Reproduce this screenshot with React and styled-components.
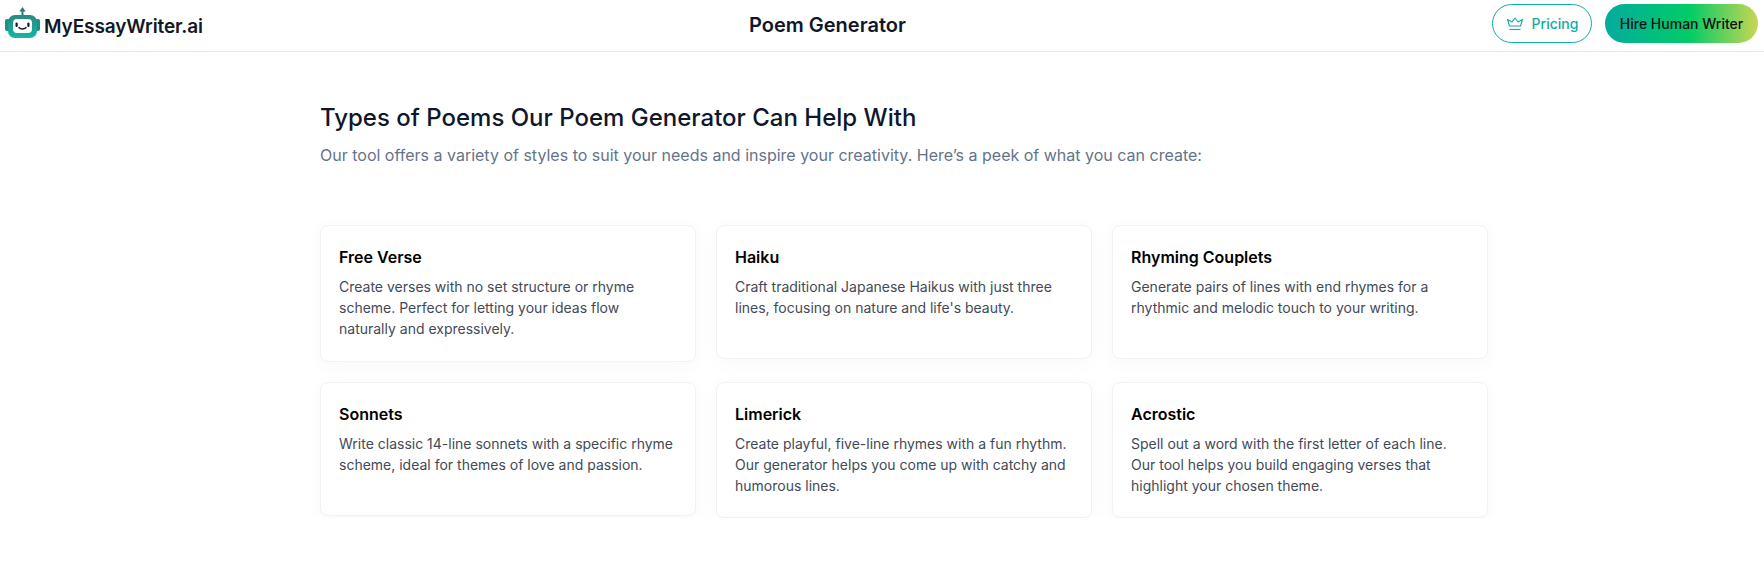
import React from 'react';
import styled, { createGlobalStyle } from 'styled-components';

const Global = createGlobalStyle`
  * { box-sizing: border-box; }
  html, body { margin: 0; padding: 0; background: #fff; }
  body { font-family: Inter, "Liberation Sans", sans-serif; color: #0f172a; }
`;

const Header = styled.header`
  height: 52px;
  border-bottom: 1px solid #e5e7eb;
  padding: 0 6px 0 5px;
  display: grid;
  grid-template-columns: 744px auto 1fr;
  align-items: center;
`;

const Brand = styled.div`
  display: flex;
  align-items: center;
  gap: 5px;
  padding-top: 2px;
  font-size: 19px;
  font-weight: 600;
  letter-spacing: -0.1px;
  color: #111827;
`;

const LogoMark = styled.svg`
  flex: none;
  margin-bottom: 8px;
  margin-right: -1px;
`;

const PageTitle = styled.h1`
  margin: 0 0 2px;
  font-size: 20px;
  font-weight: 600;
  color: #0f172a;
`;

const Actions = styled.div`
  display: flex;
  justify-content: flex-end;
  gap: 13px;
  margin-bottom: 4px;
`;

const PricingButton = styled.button`
  width: 100px;
  height: 39px;
  border: 1px solid #0fb0a2;
  border-radius: 20px;
  background: #fff;
  color: #12ada0;
  font: 500 14px Inter, sans-serif;
  display: flex;
  align-items: center;
  justify-content: center;
  gap: 8px;
`;

const HireButton = styled.button`
  width: 153px;
  height: 39px;
  border: 0;
  border-radius: 20px;
  background: linear-gradient(90deg, #06ab9f 0%, #00cc66 55%, #c8d653 100%);
  color: #111;
  font: 500 14px Inter, sans-serif;
`;

const Main = styled.main`
  width: 1168px;
  margin-left: 320px;
  padding-top: 50px;
`;

const Heading = styled.h2`
  margin: 0;
  font-size: 24px;
  line-height: 32px;
  font-weight: 500;
  color: #0f172a;
`;

const Lead = styled.p`
  margin: 9px 0 0;
  font-size: 16px;
  line-height: 24px;
  color: #64748b;
`;

const Grid = styled.div`
  margin-top: 58px;
  display: grid;
  grid-template-columns: repeat(3, 375.5px);
  column-gap: 20.5px;
  row-gap: 20px;
  align-items: start;
`;

const Card = styled.article`
  height: ${(p) => p.$h}px;
  padding: 19px 18px 0;
  background: #fff;
  border: 1px solid #f1f2f4;
  border-radius: 8px;
  box-shadow: 0 4px 20px rgba(0, 0, 0, 0.03);
`;

const CardTitle = styled.h3`
  margin: 0;
  font-size: 16px;
  line-height: 24px;
  font-weight: 600;
  color: #000;
`;

const CardText = styled.p`
  margin: 7px 0 0;
  font-size: 14px;
  line-height: 21px;
  color: #434a57;
`;

function LogoIcon() {
  return (
    <LogoMark width="35" height="31" viewBox="0 0 35 31">
      <defs>
        <linearGradient id="bot" x1="0" y1="0" x2="0" y2="1">
          <stop offset="0" stopColor="#2a8a7e" />
          <stop offset="1" stopColor="#12b8a6" />
        </linearGradient>
      </defs>
      <path d="M17.500 0l-3.200 4.600h2.200V8h2V4.600h2.200z" fill="#1f8073" />
      <rect x="0" y="12" width="5" height="12" rx="2" fill="#1f8f81" />
      <rect x="30" y="12" width="5" height="12" rx="2" fill="#1f8f81" />
      <rect x="3" y="8" width="29" height="23" rx="7" fill="url(#bot)" />
      <rect x="8" y="12" width="19" height="14" rx="4" fill="#fff" />
      <rect x="10.500" y="15.500" width="2.200" height="4.500" rx="1.100" fill="#111827" />
      <rect x="22.300" y="15.500" width="2.200" height="4.500" rx="1.100" fill="#111827" />
      <path d="M14 20.500c1.500 2 5.500 2 7 0" fill="none" stroke="#111827" strokeWidth="1.400" strokeLinecap="round" />
    </LogoMark>
  );
}

function CrownIcon() {
  return (
    <svg width="18" height="14" viewBox="0 0 18 14" fill="none" stroke="#12ada0" strokeWidth="1.1" strokeLinejoin="round">
      <path d="M3.500 9L1.500 2.500 6 5 9 1l3 4 4.500-2.500L14.500 9z" />
      <path d="M3.500 12.500h11" />
    </svg>
  );
}

const cards = [
  { title: 'Free Verse', h: 137, text: 'Create verses with no set structure or rhyme scheme. Perfect for letting your ideas flow naturally and expressively.' },
  { title: 'Haiku', h: 134, text: "Craft traditional Japanese Haikus with just three lines, focusing on nature and life's beauty." },
  { title: 'Rhyming Couplets', h: 134, text: 'Generate pairs of lines with end rhymes for a rhythmic and melodic touch to your writing.' },
  { title: 'Sonnets', h: 134, text: 'Write classic 14-line sonnets with a specific rhyme scheme, ideal for themes of love and passion.' },
  { title: 'Limerick', h: 136, text: 'Create playful, five-line rhymes with a fun rhythm. Our generator helps you come up with catchy and humorous lines.' },
  { title: 'Acrostic', h: 136, text: 'Spell out a word with the first letter of each line. Our tool helps you build engaging verses that highlight your chosen theme.' },
];

export default function App() {
  return (
    <>
      <Global />
      <Header>
        <Brand>
          <LogoIcon />
          MyEssayWriter.ai
        </Brand>
        <PageTitle>Poem Generator</PageTitle>
        <Actions>
          <PricingButton>
            <CrownIcon />
            Pricing
          </PricingButton>
          <HireButton>Hire Human Writer</HireButton>
        </Actions>
      </Header>
      <Main>
        <Heading>Types of Poems Our Poem Generator Can Help With</Heading>
        <Lead>Our tool offers a variety of styles to suit your needs and inspire your creativity. Here’s a peek of what you can create:</Lead>
        <Grid>
          {cards.map((card) => (
            <Card key={card.title} $h={card.h}>
              <CardTitle>{card.title}</CardTitle>
              <CardText>{card.text}</CardText>
            </Card>
          ))}
        </Grid>
      </Main>
    </>
  );
}
